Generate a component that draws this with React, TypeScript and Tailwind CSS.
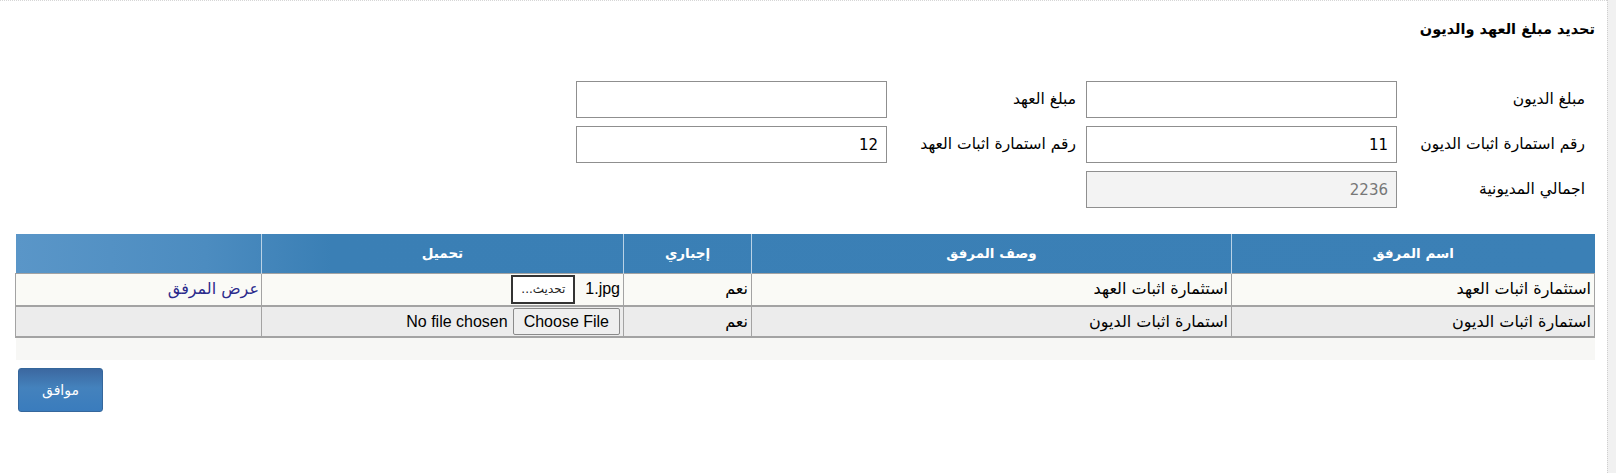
import React from 'react'

const font = "font-['Liberation_Sans','DejaVu_Sans',sans-serif]"
const arFont = "font-['DejaVu_Sans',sans-serif]"

function Field({ value, disabled }: { value?: string; disabled?: boolean }) {
  return (
    <input
      readOnly
      value={value ?? ''}
      className={
        'h-[37px] w-[311px] border border-[#8f8f8f] px-[8px] text-right text-[15px] outline-none ' +
        arFont +
        (disabled ? ' bg-[#f3f3f3] text-[#777]' : ' bg-white text-black')
      }
    />
  )
}

export default function App() {
  const rows = [
    { name: 'استثمارة اثبات العهد', desc: 'استثمارة اثبات العهد', must: 'نعم', done: true },
    { name: 'استمارة اثبات الديون', desc: 'استمارة اثبات الديون', must: 'نعم', done: false },
  ]

  return (
    <div className={'flex h-[473px] w-full bg-white text-black ' + font}>
      <div dir="rtl" className="flex-1 border-t border-dotted border-[#d6d6d6] pl-[15px] pr-[12px] pt-[18px]">
        <h1 className={'text-[14.5px] font-bold leading-[20px] ' + arFont}>تحديد مبلغ العهد والديون</h1>

        <div className={'mt-[42px] flex flex-col gap-[8px] text-[15.5px] ' + arFont}>
          <div className="flex items-center">
            <div className="w-[198px] pr-[10px]">مبلغ الديون</div>
            <Field />
            <div className="w-[199px] pr-[10px]">مبلغ العهد</div>
            <Field />
          </div>
          <div className="flex items-center">
            <div className="w-[198px] pr-[10px]">رقم استمارة اثبات الديون</div>
            <Field value="11" />
            <div className="w-[199px] pr-[10px]">رقم استمارة اثبات العهد</div>
            <Field value="12" />
          </div>
          <div className="flex items-center">
            <div className="w-[198px] pr-[10px]">اجمالي المديونية</div>
            <Field value="2236" disabled />
          </div>
        </div>

        <table className="mt-[26px] w-[1579px] table-fixed border-collapse text-[16px]">
          <colgroup>
            <col className="w-[363px]" />
            <col className="w-[480px]" />
            <col className="w-[128px]" />
            <col className="w-[362px]" />
            <col className="w-[246px]" />
          </colgroup>
          <thead>
            <tr className="h-[39px] bg-[linear-gradient(to_left,#3b80b6_0%,#3a7fb5_80%,#4c8cc0_88%,#5a96c8_100%)] text-white">
              {['اسم المرفق', 'وصف المرفق', 'إجباري', 'تحميل', ''].map((h, i) => (
                <th
                  key={i}
                  className={
                    'border-l border-[#b9d2e6] text-center text-[13.5px] font-bold last:border-l-0 ' + arFont
                  }
                >
                  {h}
                </th>
              ))}
            </tr>
          </thead>
          <tbody>
            {rows.map((r, i) => (
              <tr
                key={i}
                className={
                  (i === 0 ? 'h-[33px] bg-[#fafaf6]' : 'h-[31px] bg-[#ececec]') +
                  ' border-b-2 border-[#a3a3a3]'
                }
              >
                <td className={'border border-[#a3a3a3] px-[3px] text-right ' + arFont}>{r.name}</td>
                <td className={'border border-[#a3a3a3] px-[3px] text-right ' + arFont}>{r.desc}</td>
                <td className={'border border-[#a3a3a3] px-[3px] text-right ' + arFont}>{r.must}</td>
                <td className="border border-[#a3a3a3] px-[3px]">
                  {r.done ? (
                    <div className="flex items-center gap-[10px]">
                      <span className="text-[16px]" dir="ltr">1.jpg</span>
                      <button className={'h-[29px] w-[64px] border-2 border-[#333] bg-white text-[12px] text-[#222] ' + arFont}>
                        تحديث...
                      </button>
                    </div>
                  ) : (
                    <div className="flex items-center gap-[5px]">
                      <button className="h-[27px] rounded-[2px] border border-[#8a8a8a] bg-[#efefef] px-[10px] text-[16px]">
                        Choose File
                      </button>
                      <span className="text-[16px]" dir="ltr">No file chosen</span>
                    </div>
                  )}
                </td>
                <td className="border border-[#a3a3a3] px-[2px] text-right">
                  {r.done && <a className={'text-[#2b2b8c] ' + arFont}>عرض المرفق</a>}
                </td>
              </tr>
            ))}
          </tbody>
        </table>
        <div className="h-[22px] w-[1579px] bg-[#f7f7f5]" />

        <div className="flex justify-end pl-[3px] pt-[8px]">
          <button
            className={
              'h-[44px] w-[85px] rounded-[3px] border border-[#35679c] bg-[linear-gradient(to_bottom,#3c68a0_0%,#4482bd_45%,#3a7cbd_100%)] text-[14px] text-white ' +
              arFont
            }
          >
            موافق
          </button>
        </div>
      </div>
      <div className="w-[9px] border-l border-dotted border-[#cfcfcf] bg-[#f1f1f1]" />
    </div>
  )
}
